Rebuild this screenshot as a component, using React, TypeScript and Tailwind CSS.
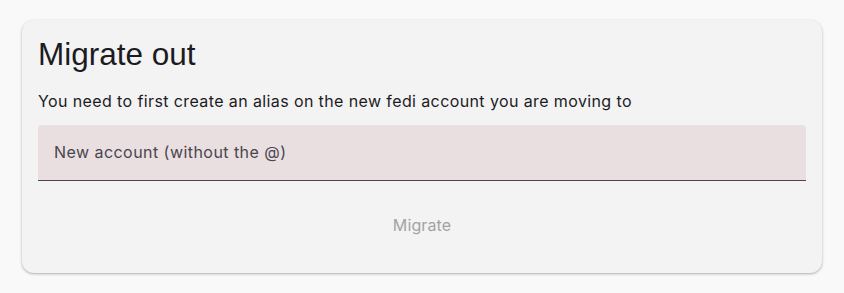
import React from "react";

export default function App() {
  return (
    <div className="min-h-[293px] w-full bg-[#f9f9f9] pt-[20px] px-[22px] pb-[20px]">
      <div className="rounded-[12px] bg-[#f3f3f3] px-4 pt-4 pb-[28px] shadow-[0_1px_3px_1px_rgba(0,0,0,0.08),0_1px_2px_rgba(0,0,0,0.2)]">
        <h1 className="font-['Liberation_Sans',Arial,sans-serif] text-[31.5px] leading-[36.8px] text-[#1c1b1f]">
          Migrate out
        </h1>
        <p className="mt-4 font-['Inter',sans-serif] text-[16px] leading-6 tracking-[0.39px] text-[#1c1b1f]">
          You need to first create an alias on the new fedi account you are moving to
        </p>
        <div className="mt-3 flex h-[56px] items-center rounded-t-[4px] border-b border-[#49454f] bg-[#eadfe0] px-4">
          <span className="font-['Inter',sans-serif] text-[16px] leading-6 tracking-[0.45px] text-[#49454f]">
            New account (without the @)
          </span>
        </div>
        <div className="mt-6 flex justify-center">
          <button
            disabled
            className="h-10 px-6 font-['Inter',sans-serif] text-[16px] leading-6 tracking-[0.1px] text-[#a3a3a6]"
          >
            Migrate
          </button>
        </div>
      </div>
    </div>
  );
}
